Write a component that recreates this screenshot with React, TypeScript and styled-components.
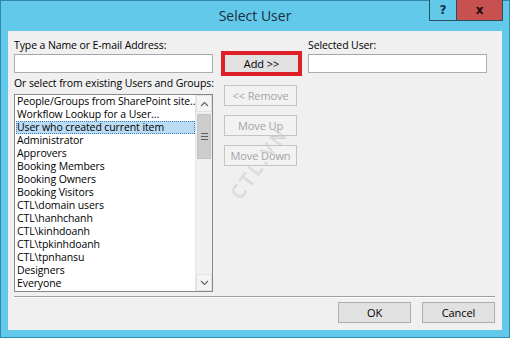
import React from "react";
import styled, { createGlobalStyle } from "styled-components";

const GlobalStyle = createGlobalStyle`
  html, body {
    margin: 0;
    padding: 0;
    background: #fff;
  }
  body {
    font-family: "Open Sans", "Noto Sans", sans-serif;
  }
`;

const Window = styled.div`
  width: 510px;
  height: 338px;
  box-sizing: border-box;
  background: #62c9eb;
  border: 1px solid #2f88aa;
  padding: 0 7px 7px 7px;
  display: flex;
  flex-direction: column;
`;

const TitleBar = styled.div`
  height: 30px;
  flex-shrink: 0;
  display: grid;
  grid-template-columns: 1fr auto 1fr;
`;

const Title = styled.div`
  grid-column: 2;
  align-self: center;
  font-size: 14px;
  color: #1c2f3c;
  line-height: 20px;
`;

const Controls = styled.div`
  grid-column: 3;
  justify-self: end;
  align-self: start;
  display: flex;
  margin-top: -1px;
  margin-right: -1px;
`;

const CaptionButton = styled.div<{ $close?: boolean }>`
  width: ${(p) => (p.$close ? "46px" : "28px")};
  height: 21px;
  box-sizing: border-box;
  border: 1px solid #2c4e5e;
  border-left-width: ${(p) => (p.$close ? "0" : "1px")};
  border-top: none;
  background: ${(p) => (p.$close ? "#c75050" : "#62c9eb")};
  display: flex;
  align-items: center;
  justify-content: center;
  font-family: "DejaVu Sans", sans-serif;
  font-weight: bold;
  font-size: 12px;
  color: ${(p) => (p.$close ? "#1a0c0c" : "#13304a")};
`;

const Client = styled.div`
  flex: 1;
  position: relative;
  background: #f0f0f0;
  display: flex;
  flex-direction: column;
  padding: 7px 7px 7px 6px;
  overflow: hidden;
  font-size: 10.5px;
  letter-spacing: -0.1px;
  color: #000;
`;

const Main = styled.div`
  display: flex;
  align-items: flex-start;
`;

const LeftColumn = styled.div`
  width: 199px;
  display: flex;
  flex-direction: column;
`;

const Label = styled.div<{ $gap?: number }>`
  height: 14px;
  line-height: 14px;
  white-space: nowrap;
  margin-top: ${(p) => p.$gap ?? 0}px;
`;

const TextInput = styled.div<{ $width: number }>`
  width: ${(p) => p.$width}px;
  height: 19px;
  box-sizing: border-box;
  margin-top: 2px;
  background: #fff;
  border: 1px solid #abadb3;
  border-top-color: #a3a6ad;
`;

const ListBox = styled.div`
  margin-top: 4px;
  height: 198px;
  box-sizing: border-box;
  background: #fff;
  border: 1px solid #828790;
  display: flex;
`;

const Rows = styled.div`
  flex: 1;
  overflow: hidden;
`;

const Row = styled.div<{ $selected?: boolean }>`
  height: 13px;
  line-height: 13px;
  margin-left: 1px;
  padding-left: 1px;
  white-space: nowrap;
  box-sizing: border-box;
  background: ${(p) => (p.$selected ? "#bcdcf4" : "transparent")};
  outline: ${(p) => (p.$selected ? "1px dotted #3a7fc0" : "none")};
  outline-offset: -1px;
`;

const ScrollBar = styled.div`
  width: 17px;
  background: #f0f0f0;
  border-left: 1px solid #e6e6e6;
  box-sizing: border-box;
  display: flex;
  flex-direction: column;
`;

const ArrowButton = styled.div`
  height: 17px;
  display: flex;
  align-items: center;
  justify-content: center;
  background: #f4f4f4;
  border: 1px solid #e2e2e2;
  box-sizing: border-box;
`;

const Thumb = styled.div`
  margin: 2px 1px 0 1px;
  height: 45px;
  background: #cdcdcd;
  border: 1px solid #c4c4c4;
  box-sizing: border-box;
  display: flex;
  flex-direction: column;
  align-items: center;
  justify-content: center;
  gap: 2px;
`;

const Grip = styled.div`
  width: 7px;
  height: 1px;
  background: #5f5f5f;
`;

const Track = styled.div`
  flex: 1;
`;

const MiddleColumn = styled.div`
  width: 81px;
  margin-left: 8px;
  margin-top: 13px;
  padding-left: 3px;
  box-sizing: border-box;
  display: flex;
  flex-direction: column;
  gap: 9px;
`;

const Highlight = styled.div`
  margin-left: -3px;
  width: 81px;
  height: 25px;
  box-sizing: border-box;
  border: 4px solid #df1f27;
  display: flex;
`;

const Button = styled.div<{ $disabled?: boolean; $flat?: boolean }>`
  width: 73px;
  height: ${(p) => (p.$flat ? "17px" : "21px")};
  box-sizing: border-box;
  background: ${(p) => (p.$disabled ? "#f2f2f2" : "#e1e1e1")};
  border: ${(p) =>
    p.$flat ? "none" : p.$disabled ? "1px solid #c4c4c4" : "1px solid #adadad"};
  color: ${(p) => (p.$disabled ? "#a4a4a4" : "#000")};
  display: flex;
  align-items: center;
  justify-content: center;
  white-space: nowrap;
  font-size: 11px;
`;

const RightColumn = styled.div`
  margin-left: 6px;
  display: flex;
  flex-direction: column;
`;

const Separator = styled.div`
  margin-top: 4px;
  height: 1px;
  background: #a0a0a0;
  border-bottom: 1px solid #fff;
`;

const Footer = styled.div`
  margin-top: 4px;
  display: flex;
  justify-content: flex-end;
  gap: 11px;
`;

const Watermark = styled.div`
  position: absolute;
  left: 195px;
  top: 121px;
  width: 110px;
  text-align: center;
  transform: rotate(-54deg);
  font-size: 18px;
  letter-spacing: 4px;
  text-indent: 4px;
  color: transparent;
  -webkit-text-stroke: 0.6px #cbcbcb;
  pointer-events: none;
`;

const Chevron = ({ up }: { up?: boolean }) => (
  <svg width="9" height="6" viewBox="0 0 9 6">
    <path
      d={up ? "M1 5 L4.5 1.5 L8 5" : "M1 1 L4.5 4.5 L8 1"}
      fill="none"
      stroke="#606060"
      strokeWidth="1.1"
    />
  </svg>
);

const items = [
  "People/Groups from SharePoint site..",
  "Workflow Lookup for a User...",
  "User who created current item",
  "Administrator",
  "Approvers",
  "Booking Members",
  "Booking Owners",
  "Booking Visitors",
  "CTL\\domain users",
  "CTL\\hanhchanh",
  "CTL\\kinhdoanh",
  "CTL\\tpkinhdoanh",
  "CTL\\tpnhansu",
  "Designers",
  "Everyone",
];

const App = () => {
  return (
    <>
      <GlobalStyle />
      <Window>
        <TitleBar>
          <Title>Select User</Title>
          <Controls>
            <CaptionButton>?</CaptionButton>
            <CaptionButton $close>x</CaptionButton>
          </Controls>
        </TitleBar>
        <Client>
          <Main>
            <LeftColumn>
              <Label>Type a Name or E-mail Address:</Label>
              <TextInput $width={199} />
              <Label $gap={3}>Or select from existing Users and Groups:</Label>
              <ListBox>
                <Rows>
                  {items.map((item, i) => (
                    <Row key={item} $selected={i === 2}>
                      {item}
                    </Row>
                  ))}
                </Rows>
                <ScrollBar>
                  <ArrowButton>
                    <Chevron up />
                  </ArrowButton>
                  <Thumb>
                    <Grip />
                    <Grip />
                    <Grip />
                  </Thumb>
                  <Track />
                  <ArrowButton>
                    <Chevron />
                  </ArrowButton>
                </ScrollBar>
              </ListBox>
            </LeftColumn>
            <MiddleColumn>
              <Highlight>
                <Button $flat>Add &gt;&gt;</Button>
              </Highlight>
              <Button $disabled>&lt;&lt; Remove</Button>
              <Button $disabled>Move Up</Button>
              <Button $disabled>Move Down</Button>
            </MiddleColumn>
            <RightColumn>
              <Label>Selected User:</Label>
              <TextInput $width={179} />
            </RightColumn>
          </Main>
          <Separator />
          <Footer>
            <Button>OK</Button>
            <Button>Cancel</Button>
          </Footer>
          <Watermark>CTL.VN</Watermark>
        </Client>
      </Window>
    </>
  );
};

export default App;
